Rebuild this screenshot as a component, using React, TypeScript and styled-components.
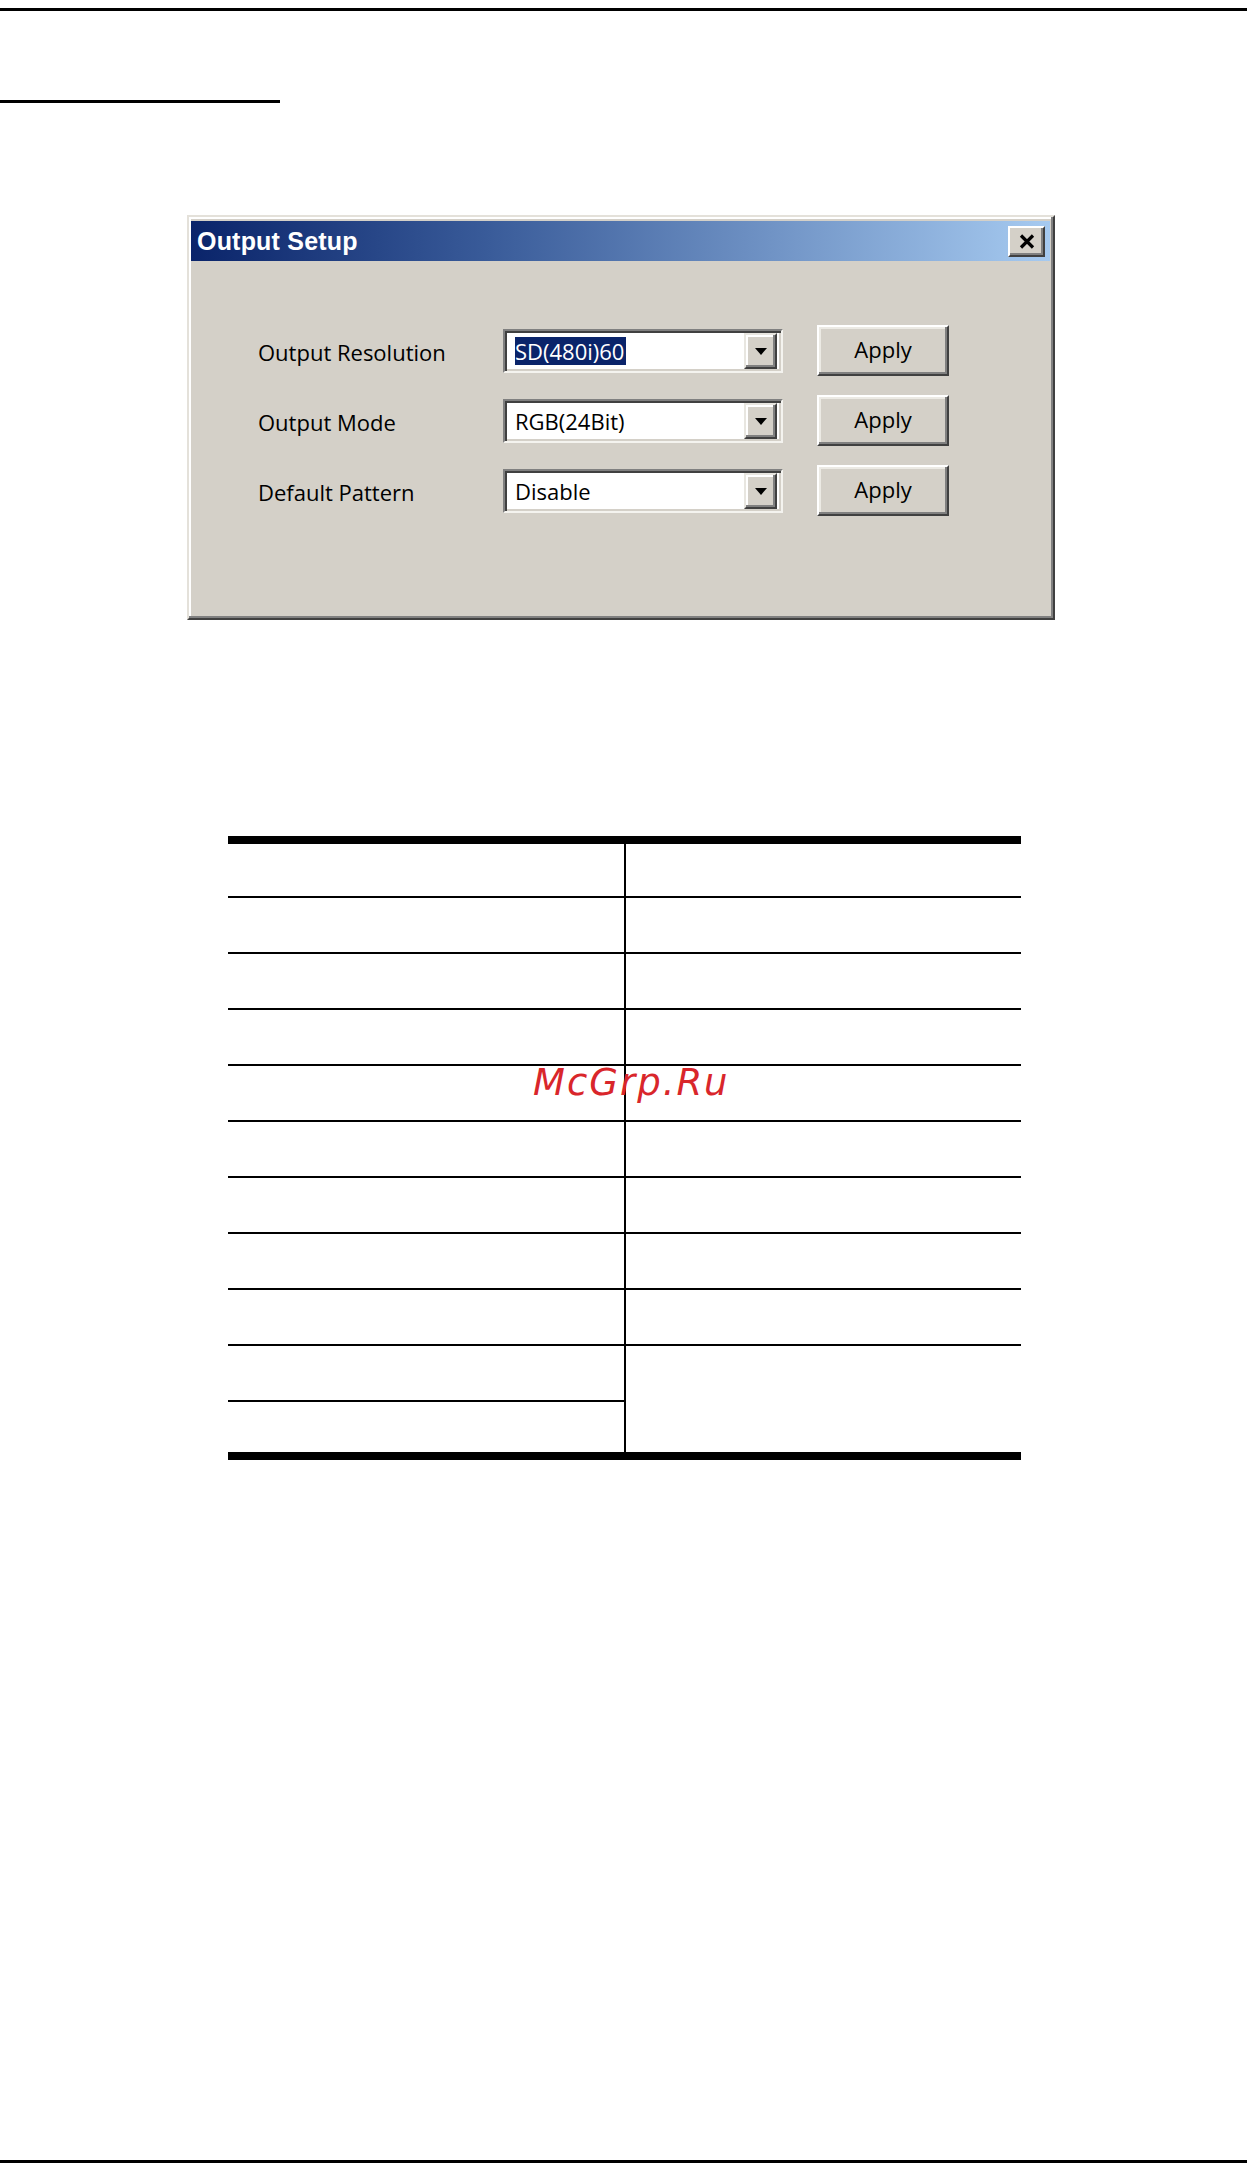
import React from "react";
import styled, { createGlobalStyle } from "styled-components";

const GlobalStyle = createGlobalStyle`
  html, body {
    margin: 0;
    padding: 0;
    background: #ffffff;
  }
  body {
    font-family: "Liberation Sans", Arial, sans-serif;
  }
  * { box-sizing: border-box; }
`;

const Page = styled.div`
  width: 1250px;
  min-height: 2163px;
  display: flex;
  flex-direction: column;
  background: #ffffff;
`;

const Rule = styled.div<{ $width: number; $top: number; $thick?: number }>`
  width: ${(p) => p.$width}px;
  height: ${(p) => p.$thick ?? 3}px;
  margin-top: ${(p) => p.$top}px;
  background: #000000;
  flex-shrink: 0;
`;

const BottomRule = styled.div`
  width: 1247px;
  height: 3px;
  margin-top: auto;
  background: #000000;
`;

/* ---------- dialog ---------- */

const Dialog = styled.div`
  margin-top: 112px;
  margin-left: 187px;
  width: 868px;
  height: 405px;
  background: #d4d0c8;
  border-style: solid;
  border-width: 2px;
  border-color: #e4e1da #404040 #404040 #e4e1da;
  box-shadow: inset -2px -2px 0 #808080, inset 2px 2px 0 #ffffff;
  padding: 4px 3px 3px 2px;
  display: flex;
  flex-direction: column;
`;

const TitleBar = styled.div`
  height: 40px;
  background: linear-gradient(to right, #0a246a 0%, #3a5c9a 35%, #a6caf0 100%);
  display: flex;
  align-items: center;
  justify-content: space-between;
  padding: 0 5px 0 6px;
`;

const Title = styled.span`
  font-family: "Liberation Sans", Arial, sans-serif;
  font-weight: 700;
  font-size: 25px;
  color: #ffffff;
  letter-spacing: 0.2px;
`;

const CloseButton = styled.div`
  width: 37px;
  height: 31px;
  background: #d4d0c8;
  border-style: solid;
  border-width: 2px;
  border-color: #ffffff #404040 #404040 #ffffff;
  box-shadow: inset -2px -2px 0 #808080;
  display: flex;
  align-items: center;
  justify-content: center;
`;

const DialogBody = styled.div`
  flex: 1;
  padding: 64px 0 0 67px;
  display: flex;
  flex-direction: column;
  gap: 19px;
`;

const SettingRow = styled.div`
  height: 51px;
  display: flex;
  align-items: center;
`;

const Label = styled.span`
  width: 245px;
  font-family: "Open Sans", "Liberation Sans", sans-serif;
  font-size: 22px;
  color: #000000;
  padding-top: 2px;
`;

const Combo = styled.div`
  width: 280px;
  height: 44px;
  background: #ffffff;
  border-style: solid;
  border-width: 2px;
  border-color: #808080 #f4f3ef #f4f3ef #808080;
  box-shadow: inset 2px 2px 0 #404040, inset -2px -2px 0 #d4d0c8;
  padding: 4px 4px 4px 10px;
  display: flex;
  align-items: center;
  justify-content: space-between;
`;

const ComboText = styled.span<{ $selected?: boolean }>`
  font-family: "Open Sans", "Liberation Sans", sans-serif;
  font-size: 22px;
  line-height: 28px;
  padding: 0 2px 0 0;
  color: ${(p) => (p.$selected ? "#ffffff" : "#000000")};
  background: ${(p) => (p.$selected ? "#0a246a" : "transparent")};
`;

const DropButton = styled.div`
  width: 33px;
  height: 36px;
  background: #d4d0c8;
  border-style: solid;
  border-width: 2px;
  border-color: #e8e6e0 #404040 #404040 #e8e6e0;
  box-shadow: inset -2px -2px 0 #808080, inset 2px 2px 0 #ffffff;
  display: flex;
  align-items: center;
  justify-content: center;
`;

const Arrow = styled.div`
  width: 0;
  height: 0;
  border-left: 6px solid transparent;
  border-right: 6px solid transparent;
  border-top: 7px solid #000000;
  margin-top: 2px;
`;

const ApplyButton = styled.div`
  margin-left: 34px;
  width: 132px;
  height: 51px;
  background: #d4d0c8;
  border-style: solid;
  border-width: 2px;
  border-color: #ffffff #404040 #404040 #ffffff;
  box-shadow: inset -2px -2px 0 #808080, inset 2px 2px 0 #eceae4;
  display: flex;
  align-items: center;
  justify-content: center;
  font-family: "Open Sans", "Liberation Sans", sans-serif;
  font-size: 22px;
  color: #000000;
  padding-bottom: 3px;
`;

/* ---------- table ---------- */

const TableWrap = styled.div`
  position: relative;
  margin-top: 216px;
  margin-left: 228px;
  width: 793px;
`;

const SpecTable = styled.div<{ $rows: string }>`
  display: grid;
  grid-template-columns: 398px 395px;
  grid-template-rows: ${(p) => p.$rows};
  border-top: 8px solid #000000;
  border-bottom: 8px solid #000000;
`;

const Cell = styled.div<{ $left?: boolean; $last?: boolean; $span?: number }>`
  border-right: ${(p) => (p.$left ? "2px solid #000000" : "none")};
  border-bottom: ${(p) => (p.$last ? "none" : "2px solid #000000")};
  grid-row: ${(p) => (p.$span ? `span ${p.$span}` : "auto")};
`;

const Watermark = styled.span`
  position: absolute;
  left: 305px;
  top: 228px;
  font-family: "DejaVu Sans", "Liberation Sans", sans-serif;
  font-style: italic;
  font-size: 37px;
  line-height: 1;
  letter-spacing: 2px;
  color: #d9262b;
  white-space: nowrap;
`;

const settings = [
  { label: "Output Resolution", value: "SD(480i)60", selected: true },
  { label: "Output Mode", value: "RGB(24Bit)", selected: false },
  { label: "Default Pattern", value: "Disable", selected: false },
];

const rowHeights = [54, 56, 56, 56, 56, 56, 56, 56, 56, 56, 50];

export default function App() {
  const cells: React.ReactNode[] = [];
  rowHeights.forEach((_, i) => {
    const last = i === rowHeights.length - 1;
    cells.push(<Cell key={`l${i}`} $left $last={last} />);
    if (i === 9) {
      cells.push(<Cell key={`r${i}`} $last $span={2} />);
    } else if (i < 9) {
      cells.push(<Cell key={`r${i}`} />);
    }
  });

  return (
    <>
      <GlobalStyle />
      <Page>
        <Rule $width={1247} $top={8} />
        <Rule $width={280} $top={89} />
        <Dialog>
          <TitleBar>
            <Title>Output Setup</Title>
            <CloseButton>
              <svg width="16" height="15" viewBox="0 0 16 15">
                <path d="M2 1.5 L14 13.5 M14 1.5 L2 13.5" stroke="#000" strokeWidth="3.2" />
              </svg>
            </CloseButton>
          </TitleBar>
          <DialogBody>
            {settings.map((s) => (
              <SettingRow key={s.label}>
                <Label>{s.label}</Label>
                <Combo>
                  <ComboText $selected={s.selected}>{s.value}</ComboText>
                  <DropButton>
                    <Arrow />
                  </DropButton>
                </Combo>
                <ApplyButton>Apply</ApplyButton>
              </SettingRow>
            ))}
          </DialogBody>
        </Dialog>
        <TableWrap>
          <SpecTable $rows={rowHeights.map((h) => `${h}px`).join(" ")}>{cells}</SpecTable>
          <Watermark>McGrp.Ru</Watermark>
        </TableWrap>
        <BottomRule />
      </Page>
    </>
  );
}
